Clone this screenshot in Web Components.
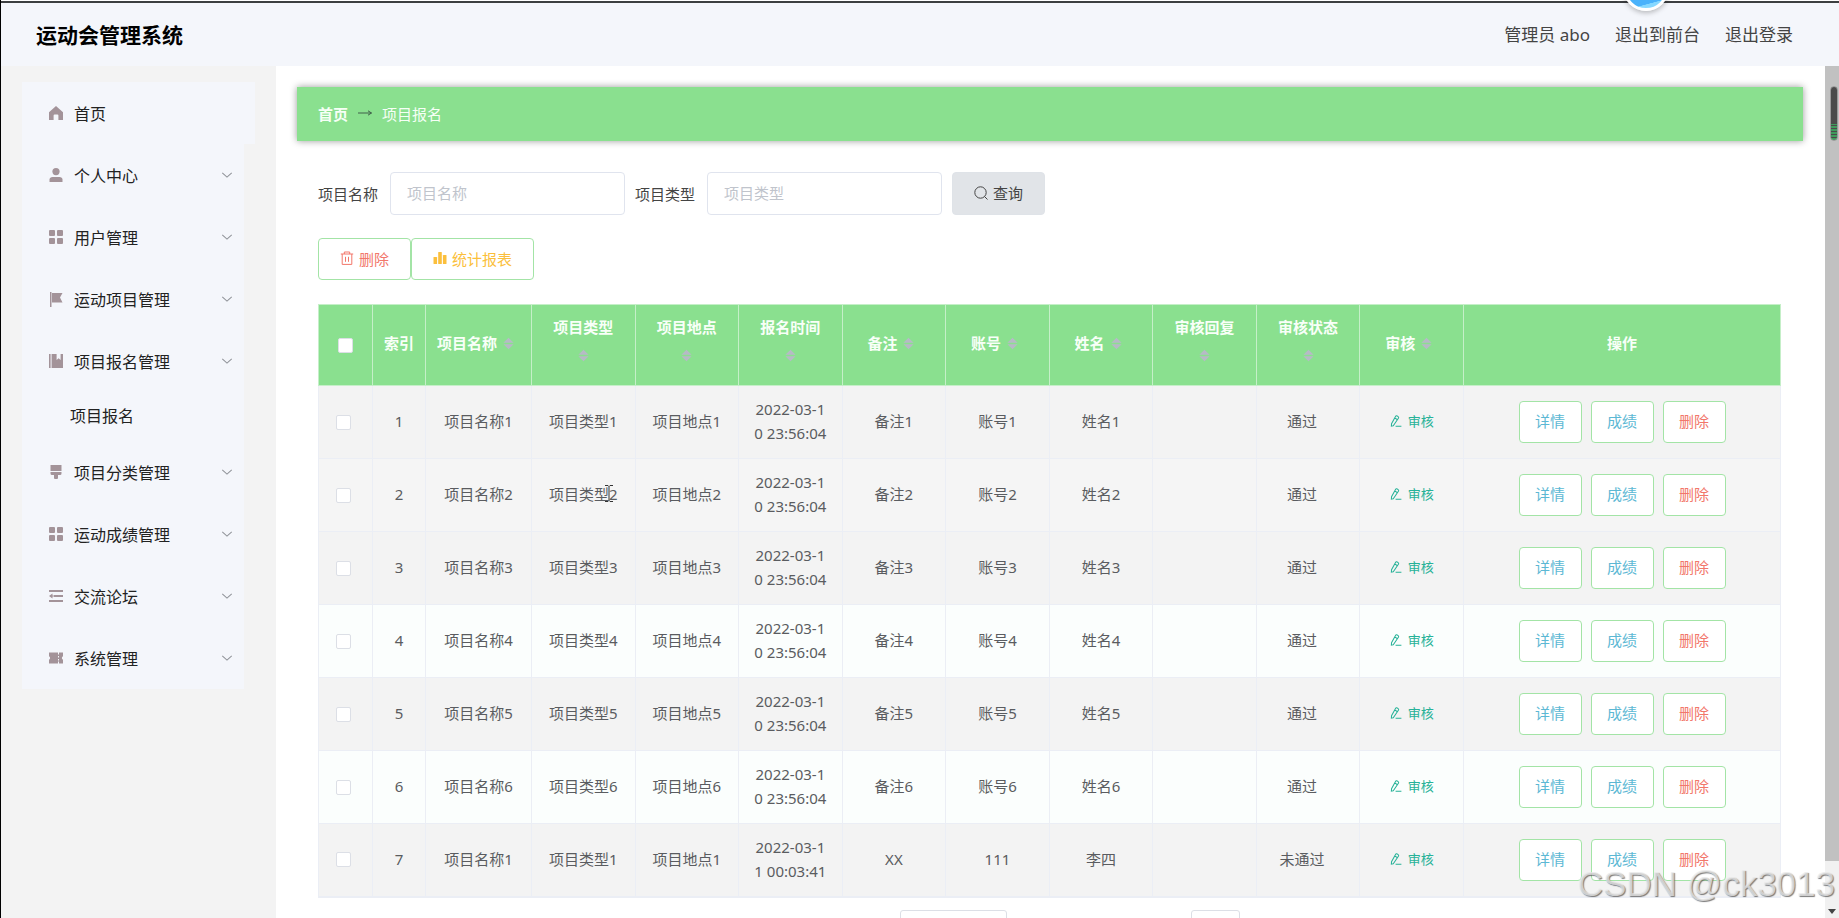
<!DOCTYPE html>
<html lang="zh-CN">
<head>
<meta charset="utf-8">
<title>运动会管理系统</title>
<style>
  body {
    margin: 0;
    height: 100vh;
    overflow: hidden;
    font-family: "Noto Sans", "Noto Sans CJK SC", sans-serif;
    font-size: 15px;
    color: #606266;
    --green: #8ae08f;
    --green-line: #a3e4a6;
    --line: #ebeef5;
  }
</style>
</head>
<body>
<sports-admin></sports-admin>

<script>
const ICONS = {
  home: '<path d="M7 0 0 6.2V14h4.6V9.4a1 1 0 0 1 1-1h2.8a1 1 0 0 1 1 1V14H14V6.2z"/>',
  user: '<circle cx="7" cy="3.6" r="3.6"/><path d="M.5 14v-2.4C.5 9.900 1.800 9 3.500 9h7c1.700 0 3 .9 3 2.600V14z"/>',
  grid: '<rect width="6" height="6" rx="1"/><rect x="8" width="6" height="6" rx="1"/><rect y="8" width="6" height="6" rx="1"/><rect x="8" y="8" width="6" height="6" rx="1"/>',
  flag: '<path d="M1 0h1.500v15H1zM3 1h10.500l-2.500 4.500 2.500 5H3z"/>',
  book: '<path d="M0 0h1.600v14H0zM2.600 0h5v6l2-1.800L11.600 6V0H14v14H2.600z"/>',
  brush: '<path d="M1.500 0h11v6h-11zM1.500 7h11v1.500a1.500 1.500 0 0 1-1.500 1.500H9v3a1 1 0 0 1-1 1H6a1 1 0 0 1-1-1v-3H3a1.500 1.500 0 0 1-1.500-1.500z"/>',
  list: '<path d="M0 1h14v2H0zM5 6h9v2H5zM0 11h14v2H0zM0 7l3.500-2.500v5zM3 6.400h2v1.200H3z"/>',
  ticket: '<path d="M0 1.500h9v2h1v-2h4v3.700a2 2 0 0 0 0 3.600v3.700h-4v-2H9v2H0V8.800a2 2 0 0 0 0-3.600zM9 5v1.500h1V5zm0 3v1.500h1V8z"/>',
  down: '<path d="m1.500 4.500 5.500 5 5.500-5" fill="none" stroke="currentColor" stroke-width="1.200"/>',
  search: '<g fill="none" stroke="currentColor"><circle cx="6.500" cy="6.500" r="5.700"/><path d="m10.500 10.500 3 3"/></g>',
  trash: '<g fill="none" stroke="currentColor"><path d="M.8 3h12.400M4.300 3V1h5.400v2M2.200 3v10.400h9.600V3M5.500 5.800v5M8.500 5.800v5"/></g>',
  chart: '<rect x=".5" y="6" width="3.600" height="7" rx=".6"/><rect x="5.200" y="1" width="3.600" height="12" rx=".6"/><rect x="9.900" y="4" width="3.600" height="9" rx=".6"/>',
  edit: '<g fill="none" stroke="currentColor" stroke-width="1.200"><path d="M3.800 12.500 1.600 13l.2-2.800L6.600 1.600a1.300 1.300 0 0 1 1.900-.4l1 .7a1.300 1.300 0 0 1 .3 1.900zM5.500 3.300l2.800 2M6.500 13.200h6.800"/></g>',
  arrow: '<path d="M0 7h13.500M10 4.800 13.500 7 10 9.200" fill="none" stroke="currentColor"/>',
  caret: '<path d="M1.500 6.200 7 .8l5.500 5.400zM1.500 7.800 7 13.200l5.500-5.400z"/>',
};

class AppIcon extends HTMLElement {
  constructor() {
    super();
    this.attachShadow({ mode: "open" });
  }

  connectedCallback() {
    this.shadowRoot.innerHTML = /*html*/ `
      <style>
        :host { display: inline-block; width: 14px; height: 14px; flex: none; }
        svg { display: block; width: 100%; height: 100%; overflow: visible; }
      </style>
      <svg viewBox="0 0 14 14" fill="currentColor" aria-hidden="true">${ICONS[this.getAttribute("name")]}</svg>
    `;
  }
}
customElements.define("app-icon", AppIcon);

class TopBar extends HTMLElement {
  constructor() {
    super();
    this.attachShadow({ mode: "open" });
    this.shadowRoot.innerHTML = /*html*/ `
      <style>
        :host {
          display: flex;
          position: relative;
          align-items: center;
          justify-content: space-between;
          box-sizing: border-box;
          height: 65px;
          padding: 0 46px 2px 35px;
          border-top: 2px solid #3c3f41;
          margin-top: 1px;
          background: #f4f6fb;
          color: #444;
        }
        h1 { margin: 0; font-size: 21px; color: #000; }
        nav { display: flex; gap: 25px; font-size: 17px; }
        a { color: inherit; text-decoration: none; }
        /* floating assistant ball, mostly above the window edge */
        .ball {
          position: absolute;
          right: 170px;
          top: -38px;
          width: 40px;
          height: 40px;
          border: 3px solid #fff;
          border-radius: 50%;
          background: linear-gradient(165deg, #4ab2fb 82%, #86d8ff 83%, #86d8ff 92%, #55b8fb 93%);
          box-shadow: 0 2px 5px rgba(0, 0, 0, .25);
        }
      </style>
      <h1><slot></slot></h1>
      <nav>
        <span>管理员 abo</span>
        <a href="#">退出到前台</a>
        <a href="#">退出登录</a>
      </nav>
      <span class="ball"></span>
    `;
  }
}
customElements.define("top-bar", TopBar);

class MenuItem extends HTMLElement {
  constructor() {
    super();
    this.attachShadow({ mode: "open" });
  }

  connectedCallback() {
    const plain = this.hasAttribute("plain");
    this.shadowRoot.innerHTML = /*html*/ `
      <style>
        :host { display: block; margin-right: 11px; background: #f4f6fb; }
        :host([plain]) { margin-right: 0; }
        a {
          display: flex;
          align-items: center;
          gap: 11px;
          height: 62px;
          padding: 0 11px 0 27px;
          color: #222;
          font-size: 16px;
          text-decoration: none;
        }
        app-icon { color: #a39399; }
        span { flex: 1; }
        .chevron { width: 12px; height: 12px; color: #909399; }
        ::slotted(a) {
          display: block;
          padding-left: 48px;
          line-height: 49px;
          font-size: 16px;
          color: #222;
          text-decoration: none;
        }
      </style>
      <a href="#">
        <app-icon name="${this.getAttribute("icon")}"></app-icon>
        <span>${this.getAttribute("label")}</span>
        ${plain ? "" : '<app-icon class="chevron" name="down"></app-icon>'}
      </a>
      <slot></slot>
    `;
  }
}
customElements.define("menu-item", MenuItem);

class SideMenu extends HTMLElement {
  constructor() {
    super();
    this.attachShadow({ mode: "open" });
    this.shadowRoot.innerHTML = /*html*/ `
      <style>
        :host {
          display: block;
          flex: none;
          box-sizing: border-box;
          width: 275px;
          padding: 16px 21px 0;
          background: #f3f3f3;
        }
      </style>
      <nav><slot></slot></nav>
    `;
  }
}
customElements.define("side-menu", SideMenu);

class BreadCrumb extends HTMLElement {
  constructor() {
    super();
    this.attachShadow({ mode: "open" });
    this.shadowRoot.innerHTML = /*html*/ `
      <style>
        :host {
          display: flex;
          align-items: center;
          gap: 10px;
          box-sizing: border-box;
          height: 54px;
          padding: 0 21px 2px;
          background: var(--green);
          box-shadow: 0 0 7px rgba(0, 0, 0, .4);
          color: #f6fff6;
        }
        a { color: inherit; font-weight: bold; text-decoration: none; }
        app-icon { color: #40604a; }
      </style>
      <a href="#">首页</a>
      <app-icon name="arrow"></app-icon>
      <slot></slot>
    `;
  }
}
customElements.define("bread-crumb", BreadCrumb);

class SearchField extends HTMLElement {
  constructor() {
    super();
    this.attachShadow({ mode: "open" });
  }

  connectedCallback() {
    const label = this.getAttribute("label");
    this.shadowRoot.innerHTML = /*html*/ `
      <style>
        :host { display: flex; align-items: center; gap: 12px; }
        label { color: #444; }
        input {
          box-sizing: border-box;
          width: 235px;
          height: 43px;
          padding: 0 16px 2px;
          border: 1px solid #e0e4ee;
          border-radius: 4px;
          background: #fff;
          font: inherit;
        }
        input::placeholder { color: #c0c4cc; }
      </style>
      <label for="field">${label}</label>
      <input id="field" type="text" placeholder="${label}">
    `;
  }
}
customElements.define("search-field", SearchField);

class ActionButton extends HTMLElement {
  constructor() {
    super();
    this.attachShadow({ mode: "open" });
  }

  connectedCallback() {
    const icon = this.getAttribute("icon");
    this.shadowRoot.innerHTML = /*html*/ `
      <style>
        :host { display: inline-block; --tone: #5cb8d4; }
        :host([tone="danger"]) { --tone: #f2776a; }
        :host([tone="warn"]) { --tone: #fbbf3c; }
        button {
          display: flex;
          align-items: center;
          justify-content: center;
          gap: 5px;
          box-sizing: border-box;
          min-width: 63px;
          height: 42px;
          padding: 0 15px 2px;
          border: 1px solid var(--green-line);
          border-radius: 4px;
          background: #fff;
          color: var(--tone);
          font: inherit;
        }
        :host([icon]) button { padding: 0 21px 2px; }
        :host([tone="query"]) button {
          height: 43px;
          border-color: #dfe3e8;
          background: #e1e4e8;
          color: #444;
        }
      </style>
      <button type="button">
        ${icon ? `<app-icon name="${icon}"></app-icon>` : ""}<slot></slot>
      </button>
    `;
  }
}
customElements.define("action-button", ActionButton);

class EntryTable extends HTMLElement {
  constructor() {
    super();
    this.attachShadow({ mode: "open" });
  }

  set data({ columns, rows }) {
    const html = /*html*/ `
      <style>
        :host { display: block; }
        table {
          width: 100%;
          table-layout: fixed;
          border-collapse: collapse;
          border: 1px solid var(--line);
          border-bottom-width: 2px;
          text-align: center;
        }
        .check { width: 54px; }
        .index { width: 53px; }
        .name { width: 106px; }
        .ops { width: 317px; }
        th, td { border: 1px solid var(--line); line-height: 24px; }
        th {
          box-sizing: border-box;
          height: 81px;
          padding: 0 0 4px;
          border-color: #c5efc8;
          background: var(--green);
          color: #f8fff8;
        }
        th:first-child { padding: 0; }
        .head { display: flex; align-items: center; justify-content: center; }
        .head app-icon { width: 13px; height: 13px; margin: 0 5px; color: #b6bac6; }
        .head.stacked { flex-direction: column; gap: 10px; padding-bottom: 10px; }
        td {
          box-sizing: border-box;
          height: 73px;
          padding: 0 14px 2px;
          background: #f3f3f3;
          color: #5a5c60;
          word-break: break-all;
        }
        tr:nth-child(2) td { background: #f5f5f5; }
        tr:nth-child(4) td, tr:nth-child(6) td { background: #fbfefd; }
        td:first-child { padding: 0 18px 0 14px; }
        td.state { padding-right: 26px; }
        td.actions { padding: 0; }
        td.actions div { display: flex; justify-content: center; gap: 9px; }
        input {
          appearance: none;
          display: block;
          box-sizing: border-box;
          width: 15px;
          height: 15px;
          margin: 0 auto;
          border: 1px solid #dcdfe6;
          border-radius: 2px;
          background: #fff;
        }
        .audit {
          display: inline-flex;
          align-items: center;
          gap: 6px;
          padding: 0;
          border: 0;
          background: none;
          color: #27b298;
          font: inherit;
          font-size: 13px;
        }
        .audit app-icon { width: 12px; height: 12px; }
      </style>
      <table>
        <colgroup>
          <col class="check"><col class="index"><col class="name">
          <col span="9">
          <col class="ops">
        </colgroup>
        <thead>
          <tr>
            <th><input type="checkbox" aria-label="全选"></th>
            <th>索引</th>
            ${columns
              .map(
                (title, i) => /*html*/ `
                <th>
                  <div class="head ${i > 0 && title.length > 3 ? "stacked" : ""}">
                    <span>${title}</span><app-icon name="caret"></app-icon>
                  </div>
                </th>
              `
              )
              .join("")}
            <th>操作</th>
          </tr>
        </thead>
        <tbody>
          ${rows
            .map(
              (row, i) => /*html*/ `
              <tr>
                <td><input type="checkbox" aria-label="${i + 1}"></td>
                <td>${i + 1}</td>
                ${row.slice(0, 7).map((cell) => `<td>${cell}</td>`).join("")}
                <td></td>
                <td class="state">${row[7]}</td>
                <td><button class="audit" type="button"><app-icon name="edit"></app-icon>审核</button></td>
                <td class="actions">
                  <div>
                    <action-button>详情</action-button>
                    <action-button>成绩</action-button>
                    <action-button tone="danger">删除</action-button>
                  </div>
                </td>
              </tr>
            `
            )
            .join("")}
        </tbody>
      </table>
    `;

    this.shadowRoot.innerHTML = html;
  }
}
customElements.define("entry-table", EntryTable);

class PageScroll extends HTMLElement {
  constructor() {
    super();
    this.attachShadow({ mode: "open" });
    this.shadowRoot.innerHTML = /*html*/ `
      <style>
        :host {
          display: flex;
          flex-direction: column;
          flex: none;
          position: relative;
          width: 14px;
          background: #f1f1f1;
        }
        .thumb { flex: 1; background: #c1c1c1; }
        .end { display: flex; height: 57px; align-items: flex-end; justify-content: center; }
        .end svg { margin-bottom: 4px; }
        /* volume meter that floats over the bar */
        .meter {
          position: absolute;
          top: 20px;
          right: 1px;
          width: 6px;
          height: 53px;
          border: 1px solid #999;
          border-radius: 4px;
          background: linear-gradient(#4a4a4a 37px, transparent 37px),
            repeating-linear-gradient(#3f9a5c 0 2px, #4a4a4a 2px 3px);
        }
      </style>
      <div class="thumb"></div>
      <div class="end"><svg width="8" height="5"><path d="M0 0h8L4 5z" fill="#444"/></svg></div>
      <span class="meter"></span>
    `;
  }
}
customElements.define("page-scroll", PageScroll);

class PageJump extends HTMLElement {
  constructor() {
    super();
    this.attachShadow({ mode: "open" });
    this.shadowRoot.innerHTML = /*html*/ `
      <style>
        :host { display: flex; justify-content: center; gap: 184px; margin-top: 12px; padding-left: 41px; }
        select, input {
          appearance: none;
          box-sizing: border-box;
          width: 107px;
          height: 31px;
          border: 1px solid #dcdfe6;
          border-radius: 3px;
          background: #fff;
        }
        input { width: 49px; }
      </style>
      <select aria-label="每页条数"></select>
      <input type="text" aria-label="页码">
    `;
  }
}
customElements.define("page-jump", PageJump);

class SportsAdmin extends HTMLElement {
  constructor() {
    super();
    this.attachShadow({ mode: "open" });
    this.shadowRoot.innerHTML = /*html*/ `
      <style>
        :host {
          display: flex;
          flex-direction: column;
          position: relative;
          box-sizing: border-box;
          height: 100vh;
          overflow: hidden;
          border-left: 1px solid #000;
          background: #fff;
        }
        .body { display: flex; flex: 1; min-height: 0; }
        main { flex: 1; min-width: 0; overflow: hidden; padding: 21px 22px 0 21px; }
        .content { padding: 0 22px 0 21px; }
        .search { display: flex; align-items: center; gap: 10px; margin-top: 31px; }
        .tools { display: flex; margin: 23px 0 24px; }
        .cursor { position: absolute; left: 603px; top: 485px; }
        .mark {
          position: absolute;
          right: 4px;
          bottom: 10px;
          font-family: "Liberation Sans", sans-serif;
          font-size: 35px;
          line-height: 48px;
          color: rgba(235, 235, 235, .75);
          text-shadow: 1px 1px 1px rgba(90, 90, 90, .8);
        }
      </style>
      <top-bar>运动会管理系统</top-bar>
      <div class="body">
        <side-menu>
          <menu-item plain icon="home" label="首页"></menu-item>
          <menu-item icon="user" label="个人中心"></menu-item>
          <menu-item icon="grid" label="用户管理"></menu-item>
          <menu-item icon="flag" label="运动项目管理"></menu-item>
          <menu-item icon="book" label="项目报名管理"><a href="#">项目报名</a></menu-item>
          <menu-item icon="brush" label="项目分类管理"></menu-item>
          <menu-item icon="grid" label="运动成绩管理"></menu-item>
          <menu-item icon="list" label="交流论坛"></menu-item>
          <menu-item icon="ticket" label="系统管理"></menu-item>
        </side-menu>
        <main>
          <bread-crumb>项目报名</bread-crumb>
          <div class="content">
            <div class="search">
              <search-field label="项目名称"></search-field>
              <search-field label="项目类型"></search-field>
              <action-button tone="query" icon="search">查询</action-button>
            </div>
            <div class="tools">
              <action-button tone="danger" icon="trash">删除</action-button>
              <action-button tone="warn" icon="chart">统计报表</action-button>
            </div>
            <entry-table></entry-table>
            <page-jump></page-jump>
          </div>
        </main>
        <page-scroll></page-scroll>
      </div>
      <svg class="cursor" width="10" height="17" fill="none" stroke="#333"><path d="M1 .5h3l1 1 1-1h3M5 1.500v14M1 16.500h3l1-1 1 1h3"/></svg>
      <span class="mark">CSDN @ck3013</span>
    `;

    const rows = [1, 2, 3, 4, 5, 6].map((n) => [
      `项目名称${n}`, `项目类型${n}`, `项目地点${n}`, "2022-03-10 23:56:04",
      `备注${n}`, `账号${n}`, `姓名${n}`, "通过",
    ]);
    rows.push(["项目名称1", "项目类型1", "项目地点1", "2022-03-11 00:03:41", "XX", "111", "李四", "未通过"]);

    this.shadowRoot.querySelector("entry-table").data = {
      columns: ["项目名称", "项目类型", "项目地点", "报名时间", "备注", "账号", "姓名", "审核回复", "审核状态", "审核"],
      rows,
    };
  }
}
customElements.define("sports-admin", SportsAdmin);
</script>
</body>
</html>
